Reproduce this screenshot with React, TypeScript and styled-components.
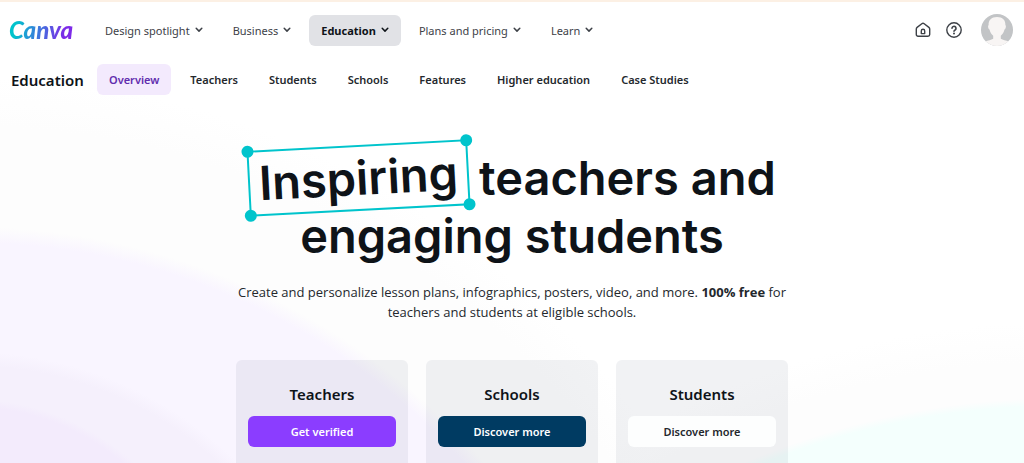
import React from "react";
import styled, { createGlobalStyle, css } from "styled-components";

const GlobalStyle = createGlobalStyle`
  * { box-sizing: border-box; }
  body {
    margin: 0;
    background: #fff;
    color: #0e1318;
    font-family: "Noto Sans", "Open Sans", sans-serif;
  }
  button, a { font-family: inherit; }
`;

const Page = styled.div`
  min-height: 100vh;
  display: flex;
  flex-direction: column;
  border-top: 2px solid #fcf0e4;
  background-color: #fff;
  background-image:
    radial-gradient(circle at -30px 641px, #f3ebfc 236px, transparent 244px),
    radial-gradient(circle at -30px 730px, #f5f0fc 366px, transparent 380px),
    radial-gradient(circle at -30px 905px, #f9f5ff 664px, transparent 680px),
    radial-gradient(circle at -30px 905px, #fdfdfd 780px, transparent 830px),
    radial-gradient(circle at calc(100% + 36px) 1200px, #f4fffd 796px, transparent 804px),
    radial-gradient(circle at calc(100% + 36px) 1200px, #fdfdfd 840px, transparent 880px);
`;

const Header = styled.header`
  display: flex;
  align-items: center;
  padding: 12px 11px 0 9px;
`;

const Logo = styled.a`
  width: 84px;
  font: italic 900 24px/28px Lato, sans-serif;
  text-decoration: none;

  span {
    background: linear-gradient(100deg, #00c4cc 12%, #3a7bdc 45%, #7d2ae8 85%);
    background-clip: text;
    -webkit-background-clip: text;
    color: transparent;
  }
`;

const MainNav = styled.nav`
  display: flex;
  flex: 1;
  gap: 6px;
`;

const NavButton = styled.button<{ $active?: boolean }>`
  display: flex;
  align-items: center;
  gap: 5px;
  height: 31px;
  padding: 0 12px;
  border: 0;
  border-radius: 6px;
  background: transparent;
  color: #3d4147;
  font-size: 11px;
  white-space: nowrap;
  ${(p) =>
    p.$active &&
    css`
      background: #e1e2e6;
      color: #0e1318;
      font-weight: 700;
    `}
`;

const Tools = styled.div`
  display: flex;
  align-items: center;
  gap: 15px;
`;

const IconButton = styled.button`
  display: flex;
  padding: 0;
  border: 0;
  background: transparent;
  color: #3d4147;
`;

const AvatarButton = styled(IconButton)`
  margin-left: 4px;
  border-radius: 50%;
  overflow: hidden;
`;

const SubNav = styled.nav`
  display: flex;
  align-items: center;
  gap: 7px;
  padding: 18px 11px 0;
`;

const SubTitle = styled.strong`
  width: 79px;
  font-size: 15px;
  line-height: 22px;
  font-weight: 600;
`;

const SubLink = styled.a<{ $active?: boolean }>`
  padding: 0 12px;
  border-radius: 6px;
  font-size: 11px;
  font-weight: 600;
  line-height: 31px;
  text-decoration: none;
  white-space: nowrap;
  color: ${(p) => (p.$active ? "#612dae" : "#24282d")};
  background: ${(p) => (p.$active ? "#f3eafd" : "transparent")};
`;

const Hero = styled.main`
  flex: 1;
  display: flex;
  flex-direction: column;
  align-items: center;
  padding-top: 54px;
`;

const Title = styled.h1`
  margin: 0;
  font: 600 47px/58px Inter, sans-serif;
  text-align: center;
`;

const Framed = styled.span`
  position: relative;
  display: inline-block;
  margin: -4px 10px -4px 0;
  padding: 0 9px;
  border: 2px solid #00c4cc;
  line-height: 62px;
  transform: rotate(-3deg);
`;

const Handle = styled.i<{ $x: "left" | "right"; $y: "top" | "bottom" }>`
  position: absolute;
  ${(p) => p.$x}: -7px;
  ${(p) => p.$y}: -7px;
  width: 12px;
  height: 12px;
  border-radius: 50%;
  background: #00c4cc;
`;

const Lead = styled.p`
  margin: 17px 0 0;
  font-family: "Open Sans", sans-serif;
  font-size: 13px;
  line-height: 20px;
  text-align: center;
  color: #24282d;
`;

const Cards = styled.section`
  flex: 1;
  display: grid;
  grid-template-columns: repeat(3, 1fr);
  gap: 18px;
  width: 552px;
  max-width: 100%;
  margin-top: 38px;
`;

const Card = styled.article`
  padding: 23px 12px 14px;
  border-radius: 6px 6px 0 0;
  background: rgba(50, 70, 100, 0.07);
  text-align: center;
`;

const CardTitle = styled.h2`
  margin: 0 0 11px;
  font-size: 15px;
  line-height: 22px;
  font-weight: 600;
`;

const CardButton = styled.button<{ $bg: string; $fg: string }>`
  width: 100%;
  height: 31px;
  border: 0;
  border-radius: 6px;
  background: ${(p) => p.$bg};
  color: ${(p) => p.$fg};
  font-size: 11px;
  font-weight: 600;
`;

const Chevron = () => (
  <svg width="8" height="6" viewBox="0 0 8 6" fill="none" stroke="currentColor" strokeWidth="1.5" strokeLinecap="round" strokeLinejoin="round" aria-hidden="true">
    <path d="M1.2 1.3 4 4.1 6.8 1.3" />
  </svg>
);

const HomeIcon = () => (
  <svg width="16" height="16" viewBox="0 0 16 16" fill="none" stroke="currentColor" strokeWidth="1.4" strokeLinejoin="round" aria-hidden="true">
    <path d="M1.3 7c0-.7.3-1.200.8-1.600L6.800 1.700c.7-.5 1.700-.5 2.400 0l4.700 3.700c.5.400.8.900.8 1.600v5.500c0 1-.8 1.700-1.700 1.700H3c-.9 0-1.700-.7-1.700-1.700z" />
    <path d="M6.300 11.600V8.900a1.700 1.700 0 0 1 3.400 0v2.700z" />
  </svg>
);

const HelpIcon = () => (
  <svg width="16" height="16" viewBox="0 0 16 16" fill="none" stroke="currentColor" strokeWidth="1.4" strokeLinecap="round" aria-hidden="true">
    <circle cx="8" cy="8" r="7.2" />
    <path d="M6 6.300a2 2 0 1 1 3.100 1.700c-.7.400-1.100.7-1.100 1.300" strokeWidth="1.6" />
    <circle cx="8" cy="11.600" r="1" fill="currentColor" stroke="none" />
  </svg>
);

const Avatar = () => (
  <svg width="32" height="32" viewBox="0 0 32 32" aria-hidden="true">
    <rect width="32" height="32" fill="#c2c4c6" />
    <path d="M16 3c5.600 0 8.600 3 8.400 8 1 .8.400 4-.9 4.500-.7 2.700-2 4.900-3.700 6.300v3c1.900 1.400 5.400 1.400 7.700 2.700V32H4.500v-4.500c2.300-1.300 5.800-1.300 7.700-2.700v-3c-1.700-1.400-3-3.600-3.700-6.300-1.300-.5-1.900-3.700-.9-4.500C7.400 6 10.400 3 16 3z" fill="#f8f5f4" />
  </svg>
);

const menus = ["Design spotlight", "Business", "Education", "Plans and pricing", "Learn"];
const sections = ["Overview", "Teachers", "Students", "Schools", "Features", "Higher education", "Case Studies"];
const audiences = [
  { name: "Teachers", action: "Get verified", bg: "#8b3dff", fg: "#fff" },
  { name: "Schools", action: "Discover more", bg: "#003b62", fg: "#fff" },
  { name: "Students", action: "Discover more", bg: "#fdfefe", fg: "#24282d" },
];

export default function App() {
  return (
    <>
      <GlobalStyle />
      <Page>
        <Header>
          <Logo href="#"><span>Canva</span></Logo>
          <MainNav aria-label="Main">
            {menus.map((name) => (
              <NavButton key={name} $active={name === "Education"}>
                {name}
                <Chevron />
              </NavButton>
            ))}
          </MainNav>
          <Tools>
            <IconButton aria-label="Home"><HomeIcon /></IconButton>
            <IconButton aria-label="Help"><HelpIcon /></IconButton>
            <AvatarButton aria-label="Account"><Avatar /></AvatarButton>
          </Tools>
        </Header>
        <SubNav aria-label="Education">
          <SubTitle>Education</SubTitle>
          {sections.map((name) => (
            <SubLink key={name} href="#" $active={name === "Overview"}>{name}</SubLink>
          ))}
        </SubNav>
        <Hero>
          <Title>
            <Framed>
              Inspiring
              <Handle $x="left" $y="top" />
              <Handle $x="right" $y="top" />
              <Handle $x="left" $y="bottom" />
              <Handle $x="right" $y="bottom" />
            </Framed>
            teachers and
            <br />
            engaging students
          </Title>
          <Lead>
            Create and personalize lesson plans, infographics, posters, video, and more. <b>100% free</b> for
            <br />
            teachers and students at eligible schools.
          </Lead>
          <Cards>
            {audiences.map((a) => (
              <Card key={a.name}>
                <CardTitle>{a.name}</CardTitle>
                <CardButton $bg={a.bg} $fg={a.fg}>{a.action}</CardButton>
              </Card>
            ))}
          </Cards>
        </Hero>
      </Page>
    </>
  );
}
